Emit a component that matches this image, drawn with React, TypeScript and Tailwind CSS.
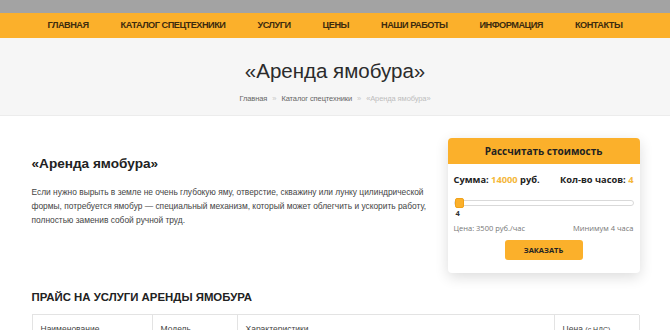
import React from "react";

const nav = ["ГЛАВНАЯ", "КАТАЛОГ СПЕЦТЕХНИКИ", "УСЛУГИ", "ЦЕНЫ", "НАШИ РАБОТЫ", "ИНФОРМАЦИЯ", "КОНТАКТЫ"];

export default function App() {
  return (
    <div className="w-[670px] h-[330px] overflow-hidden bg-white" style={{ fontFamily: '"Liberation Sans", Arial, sans-serif' }}>
      <div className="h-[13px] bg-[#a3a3a3]" />
      <nav className="h-[25px] bg-[#fbb02b] flex items-center justify-center gap-[32px]">
        {nav.map((n) => (
          <span key={n} className="text-[9.2px] font-bold text-[#3d2b0e] tracking-[-0.5px]">
            {n}
          </span>
        ))}
      </nav>
      <div className="h-[78px] bg-[#f6f6f6] border-b border-[#ececec] flex flex-col items-center pt-[20px]">
        <h1 className="text-[20.5px] leading-[26px] text-[#2b2b2b] font-normal">«Аренда ямобура»</h1>
        <div className="mt-[9px] text-[7.5px] flex items-center gap-[5px] text-[#666] tracking-[-0.1px]">
          <span>Главная</span>
          <span className="text-[#c8c8c8]">»</span>
          <span>Каталог спецтехники</span>
          <span className="text-[#c8c8c8]">»</span>
          <span className="text-[#bdbdbd]">«Аренда ямобура»</span>
        </div>
      </div>
      <div className="w-[607px] mx-auto">
        <div className="flex gap-[8px] pt-[22px]">
          <div className="flex-1 min-w-0 pt-[17px]">
            <h2 className="text-[13.6px] font-bold text-[#222] leading-[18px]">«Аренда ямобура»</h2>
            <p className="mt-[12px] text-[8.4px] leading-[14px] text-[#444] whitespace-nowrap">
              Если нужно вырыть в земле не очень глубокую яму, отверстие, скважину или лунку цилиндрической
              <br />
              формы, потребуется ямобур — специальный механизм, который может облегчить и ускорить работу,
              <br />
              полностью заменив собой ручной труд.
            </p>
          </div>
          <div
            className="w-[192px] shrink-0 h-[135px] mr-[-1px] rounded-[4px] bg-white shadow-[0_4px_14px_rgba(0,0,0,0.14)] overflow-hidden"
            style={{ fontFamily: '"Open Sans", "Noto Sans", sans-serif' }}
          >
            <div className="h-[26px] bg-[#fbb02b] flex items-center justify-center text-[10px] font-bold text-[#222]">Рассчитать стоимость</div>
            <div className="px-[6px] pt-[9px]">
              <div className="flex justify-between text-[9.3px] font-bold text-[#222] leading-[14px]">
                <span>
                  Сумма: <span className="text-[#f4b73a]">14000</span> руб.
                </span>
                <span>
                  Кол-во часов: <span className="text-[#f4b73a]">4</span>
                </span>
              </div>
              <div className="relative mt-[13px] h-[6px] rounded-full border border-[#d9d9d9] bg-white">
                <div className="absolute left-[0px] top-[-3px] w-[9px] h-[10px] rounded-[2px] bg-[#fbb02b] border border-[#f0a21a]" />
              </div>
              <div className="mt-[2px] ml-[2px] text-[7.5px] font-bold text-[#333] leading-[10px]">4</div>
              <div className="mt-[5px] flex justify-between text-[7.5px] text-[#777]">
                <span>Цена: 3500 руб./час</span>
                <span>Минимум 4 часа</span>
              </div>
              <div className="flex justify-center mt-[6px]">
                <div className="w-[78px] h-[20px] rounded-[3px] bg-[#fbb02b] flex items-center justify-center text-[7.5px] font-bold text-[#222]">ЗАКАЗАТЬ</div>
              </div>
            </div>
          </div>
        </div>
        <h3 className="mt-[17px] text-[11.4px] font-bold text-[#222] leading-[14px]">ПРАЙС НА УСЛУГИ АРЕНДЫ ЯМОБУРА</h3>
        <div className="mt-[10px] grid grid-cols-[120px_85px_317px_85px] border-t border-l border-[#e3e3e3] text-[8.5px] leading-[10px] text-[#444]">
          <div className="border-r border-[#e3e3e3] px-[8px] pt-[9px] h-[30px]">Наименование</div>
          <div className="border-r border-[#e3e3e3] px-[8px] pt-[9px]">Модель</div>
          <div className="border-r border-[#e3e3e3] px-[8px] pt-[9px]">Характеристики</div>
          <div className="border-r border-[#e3e3e3] px-[8px] pt-[9px]">Цена <span className="text-[7px]">(с НДС)</span></div>
        </div>
      </div>
    </div>
  );
}
